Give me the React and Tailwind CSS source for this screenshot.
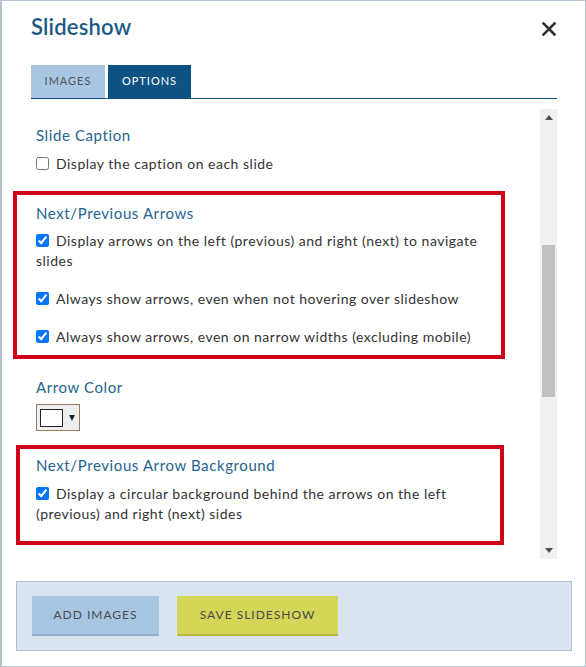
import React from "react";

function Check({ checked }) {
  return (
    <input
      type="checkbox"
      defaultChecked={checked}
      className="m-0 mr-[7px] inline-block h-[13px] w-[13px] align-[-1px]"
    />
  );
}

function Row({ checked, children, className = "" }) {
  return (
    <label className={"block text-[14px] leading-[20px] tracking-[0.5px] text-[#333333] " + className}>
      <Check checked={checked} />
      {children}
    </label>
  );
}

function Heading({ children }) {
  return <div className="text-[15px] leading-[20px] tracking-[0.6px] text-[#25648f]">{children}</div>;
}

export default function App() {
  return (
    <div className="box-border flex h-[667px] w-[586px] flex-col overflow-hidden border border-l-2 border-[#b5c2cf] bg-white font-['Lato',sans-serif]">
      {/* header */}
      <div className="flex items-start justify-between pl-[29px] pr-[29px] pt-[11px]">
        <h1 className="text-[22px] font-semibold leading-[30px] tracking-[0.2px] text-[#1b5a87]">Slideshow</h1>
        <svg className="mt-[10px]" width="14" height="14" viewBox="0 0 14 14">
          <path d="M1.5 1.5 L12.5 12.5 M12.5 1.5 L1.5 12.5" stroke="#333" strokeWidth="2.6" strokeLinecap="square" />
        </svg>
      </div>

      {/* tabs */}
      <div className="ml-[29px] mr-[28px] mt-[23px] flex gap-[3px] border-b border-[#0d5282]">
        <div className="flex h-[33px] w-[74px] items-center justify-center bg-[#a8c6e2] text-[11px] tracking-[1px] text-[#555555]">
          IMAGES
        </div>
        <div className="flex h-[33px] w-[83px] items-center justify-center bg-[#0d5282] text-[11px] tracking-[1px] text-white">
          OPTIONS
        </div>
      </div>

      {/* scroll region */}
      <div className="ml-[11px] mr-[28px] mt-[10px] flex h-[450px]">
        <div className="flex-1 overflow-hidden pt-[16px]">
          <div className="pl-[23px]">
            <Heading>Slide Caption</Heading>
            <Row className="mt-[9px]">Display the caption on each slide</Row>
          </div>

          <div className="mr-[35px] mt-[17px] border-[4px] border-[#d0021b] pb-[8px] pl-[19px] pr-[14px] pt-[8px]">
            <Heading>Next/Previous Arrows</Heading>
            <Row checked className="mt-[8px]">
              Display arrows on the left (previous) and right (next) to navigate slides
            </Row>
            <Row checked className="mt-[18px]">
              Always show arrows, even when not hovering over slideshow
            </Row>
            <Row checked className="mt-[18px]">
              Always show arrows, even on narrow widths (excluding mobile)
            </Row>
          </div>

          <div className="pl-[23px] pt-[18px]">
            <Heading>Arrow Color</Heading>
            <div className="mt-[7px] flex h-[27px] w-[44px] items-center border border-[#9c7a5a] bg-[#efefef] pl-[3px]">
              <div className="h-[18px] w-[23px] border border-[#222] bg-white" />
              <svg className="ml-[6px]" width="6" height="6" viewBox="0 0 6 6">
                <path d="M0 0 H6 L3 6 Z" fill="#222" />
              </svg>
            </div>
          </div>

          <div className="ml-[3px] mr-[36px] mt-[14px] border-[4px] border-[#d0021b] pb-[17px] pl-[16px] pr-[14px] pt-[6px]">
            <Heading>Next/Previous Arrow Background</Heading>
            <Row checked className="mt-[9px]">
              Display a circular background behind the arrows on the left (previous) and right (next) sides
            </Row>
          </div>
        </div>

        {/* scrollbar */}
        <div className="flex w-[17px] flex-col items-center bg-[#f1f1f1]">
          <svg className="mt-[6px]" width="8" height="5" viewBox="0 0 8 5">
            <path d="M0 5 L4 0 L8 5 Z" fill="#505050" />
          </svg>
          <div className="mt-[125px] h-[152px] w-[13px] bg-[#c1c1c1]" />
          <div className="flex-1" />
          <svg className="mb-[6px]" width="8" height="5" viewBox="0 0 8 5">
            <path d="M0 0 L8 0 L4 5 Z" fill="#505050" />
          </svg>
        </div>
      </div>

      {/* footer */}
      <div className="ml-[14px] mr-[13px] mt-[22px] flex h-[70px] gap-[18px] border border-[#b1c1d2] bg-[#dae4f0] pl-[15px] pt-[14px]">
        <div className="flex h-[40px] w-[127px] items-center justify-center border-b-2 border-[#8fb0d0] bg-[#a8c6e2] text-[12px] tracking-[1px] text-[#4a4a4a]">
          ADD IMAGES
        </div>
        <div className="flex h-[40px] w-[161px] items-center justify-center border-b-2 border-[#b7b941] bg-[#d4d657] text-[12px] tracking-[1px] text-[#4a4a4a]">
          SAVE SLIDESHOW
        </div>
      </div>
    </div>
  );
}
